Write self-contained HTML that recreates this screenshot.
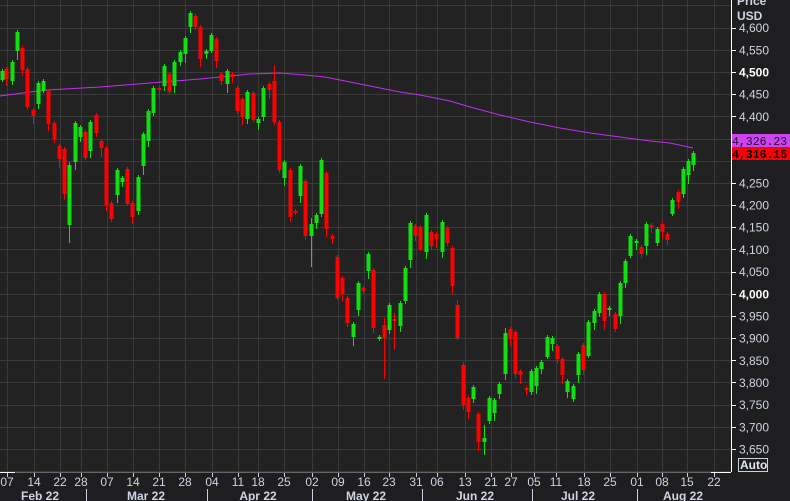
<!DOCTYPE html>
<html><head><meta charset="utf-8"><style>
html,body{margin:0;padding:0;background:#1e1d1f;width:790px;height:501px;overflow:hidden}
svg{display:block}
text{font-family:"Liberation Sans",sans-serif;font-size:12px;fill:#cdd5e4}
</style></head><body>
<svg id="s" width="790" height="501" xmlns="http://www.w3.org/2000/svg">
<rect x="0" y="0" width="731" height="472" fill="#222222"/>
<g id="grid" stroke="#3a3a3a" stroke-width="1"></g>
<polyline id="ma" fill="none" stroke="#c030f0" stroke-width="1" points=""/>
<g id="c"></g>
<line x1="731.5" y1="0" x2="731.5" y2="472" stroke="#ffffff"/>
<line x1="0" y1="472.5" x2="731" y2="472.5" stroke="#666"/>
<line x1="0" y1="472.5" x2="15" y2="472.5" stroke="#fff"/>
<line x1="711" y1="472.5" x2="731" y2="472.5" stroke="#fff"/>
<g id="ax"></g>
<text x="737" y="5" style="font-weight:bold">Price</text>
<text x="737" y="20" style="font-weight:bold">USD</text>
<rect x="732" y="134" width="58" height="13" fill="#cc44ee"/>
<text x="732" y="145" style="fill:#2a0a33;font-family:'Liberation Mono',monospace;font-size:11.5px">4,326.23</text>
<rect x="732" y="147" width="58" height="13" fill="#ff0000"/>
<text x="732" y="158" style="fill:#000;font-family:'Liberation Mono',monospace;font-size:11.5px;font-weight:bold">4,316.15</text>
<rect x="738.5" y="458.5" width="29" height="13" fill="none" stroke="#c9d2e2"/>
<text x="740" y="469" style="font-weight:bold;fill:#e0e6f0">Auto</text>
<g id="dt"></g>
</svg>
<script>
var NS="http://www.w3.org/2000/svg";
function el(p,t,a,tx){var e=document.createElementNS(NS,t);for(var k in a)e.setAttribute(k,a[k]);if(tx!=null)e.textContent=tx;p.appendChild(e);return e;}
function Y(v){return 72+(4500-v)*0.4435;}
var grid=document.getElementById('grid'),ax=document.getElementById('ax'),dt=document.getElementById('dt');
for(var v=4650;v>=3600;v-=50){var y=Math.round(Y(v))+0.5;el(grid,'line',{x1:0,y1:y,x2:731,y2:y});}
for(var v=4600;v>=3650;v-=50){var y=Y(v);
 if(v==4300)continue;
 el(ax,'line',{x1:731,y1:Math.round(y)+0.5,x2:736,y2:Math.round(y)+0.5,stroke:'#fff'});
 var s=String(v);s=s[0]+','+s.slice(1);
 var b=(v%500==0);
 el(ax,'text',{x:739,y:y+4.5,style:b?'font-weight:bold;fill:#fff':''},s);}
var ticks=[[7,'07'],[34,'14'],[60,'22'],[81,'28'],[107,'07'],[133,'14'],[159,'21'],[185,'28'],[212,'04'],[238,'11'],[258,'18'],[284,'25'],[312,'02'],[338,'09'],[364,'16'],[389,'23'],[416,'31'],[437,'06'],[465,'13'],[491,'21'],[511,'27'],[534,'05'],[556,'11'],[584,'18'],[610,'25'],[637,'01'],[662,'08'],[687,'15'],[714,'22']];
ticks.forEach(function(t){var x=t[0]+0.5;el(grid,'line',{x1:x,y1:0,x2:x,y2:472});
 el(dt,'line',{x1:x,y1:473,x2:x,y2:477,stroke:'#c9d2e2'});
 el(dt,'text',{x:t[0],y:486,'text-anchor':'middle'},t[1]);});
[86,207,312,422,532,637].forEach(function(x){el(dt,'line',{x1:x+0.5,y1:489,x2:x+0.5,y2:501,stroke:'#c9d2e2'});});
[[40,'Feb 22'],[146,'Mar 22'],[258,'Apr 22'],[366,'May 22'],[475,'Jun 22'],[578,'Jul 22'],[683,'Aug 22']].forEach(function(m){el(dt,'text',{x:m[0],y:500,'text-anchor':'middle',style:'font-weight:bold'},m[1]);});
var ma=[[0,96],[30,92],[47,90],[100,87],[150,83],[200,79],[250,74],[280,73],[292,74],[305,75],[325,77],[350,82],[380,88],[400,92],[420,95],[450,101],[470,107],[500,115],[530,122],[560,128],[590,133],[620,137],[650,141],[670,143],[693,148]];
document.getElementById('ma').setAttribute('points',ma.map(function(p){return p.join(',')}).join(' '));
var d="2,71,80,g;6,69,79,r;12,62,81,g;17,32,51,g;22,48,70,r;27,69,107,r;33,110,116,r;38,83,104,g;43,81,91,g;48,91,124,r;54,123,139,r;59,146,159,r;64,149,194,r;69,165,225,g;75,123,162,g;80,127,137,g;85,132,158,r;90,122,151,g;96,115,133,r;101,141,148,r;106,148,205,r;111,203,219,r;117,170,195,g;122,178,182,g;127,169,204,r;132,203,217,r;138,177,211,g;143,134,166,g;148,111,141,g;153,88,113,g;159,88,90,r;164,66,86,g;169,74,92,r;174,62,86,g;180,52,62,g;185,38,54,g;190,13,27,g;195,16,27,r;200,27,59,r;206,51,54,g;211,35,51,g;216,39,61,r;221,74,81,r;227,71,84,g;232,74,77,r;237,88,111,r;242,99,117,r;247,92,119,g;253,93,120,r;258,119,123,g;263,88,117,g;269,84,90,r;274,81,122,r;279,122,170,r;284,162,178,g;290,170,217,r;295,211,213,r;300,166,196,g;305,181,236,r;311,224,236,g;316,215,223,g;321,160,214,g;326,173,229,r;332,236,239,r;337,257,298,r;342,278,294,r;347,298,323,r;353,324,337,g;358,283,310,g;363,288,291,r;368,254,271,g;373,270,328,r;379,337,339,g;384,325,338,r;389,305,330,g;394,319,320,r;400,303,326,g;405,268,301,g;410,223,260,g;415,226,236,r;420,227,249,r;426,215,252,g;431,232,246,r;436,234,239,r;442,222,252,g;447,228,243,r;452,248,286,r;457,305,338,r;463,365,405,r;468,398,412,r;473,387,399,g;478,414,442,r;484,438,442,g;489,398,421,g;494,400,413,g;499,384,394,g;505,333,374,g;510,329,339,r;515,332,374,r;520,371,375,r;526,388,389,r;531,371,392,g;536,368,386,g;541,362,369,g;547,337,357,g;552,338,344,g;557,346,359,r;562,359,375,r;567,381,392,g;573,386,399,g;578,354,375,g;583,345,370,r;588,322,356,g;594,311,323,g;599,294,313,g;604,294,321,r;609,308,310,g;615,314,329,r;620,283,316,g;625,261,283,g;630,236,256,g;636,241,243,g;641,247,254,r;646,224,246,g;651,225,227,r;657,229,243,g;662,224,232,r;667,234,240,r;672,200,214,g;678,192,202,r;683,169,194,g;688,161,175,g;693,153,165,g";
var over={69:[162,243],274:[65,125],311:[218,267],384:[318,379],394:[313,350],484:[425,455],463:[362,410],505:[328,380],457:[300,340]};
var c=document.getElementById('c');
d.split(';').forEach(function(s,i){var a=s.split(',');var x=+a[0],t=+a[1],b=+a[2],col=a[3]=='g'?'#10e010':'#ff0000';
 var wt=t-(2+(i*7)%7),wb=b+(2+(i*5)%8);if(over[x]){wt=over[x][0];wb=over[x][1];}
 el(c,'line',{x1:x+0.5,y1:wt,x2:x+0.5,y2:wb,stroke:col});
 el(c,'rect',{x:x-1.5,y:t,width:4,height:Math.max(2,b-t),fill:col});});
</script>
</body></html>
